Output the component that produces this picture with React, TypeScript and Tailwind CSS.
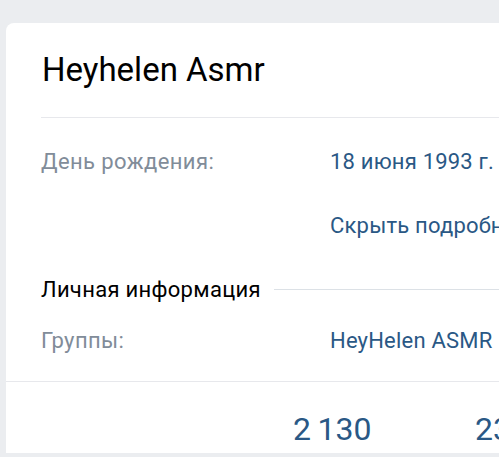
import React from "react";

const font = { fontFamily: "Roboto, 'Noto Sans', sans-serif" };

function Row({ label, value }: { label: string; value: string }) {
  return (
    <div className="flex items-center h-[30px]">
      <div className="w-[289px] shrink-0 text-[#818c99] tracking-[0.4px]">{label}</div>
      <div className="text-[#2a5885] whitespace-nowrap tracking-[0.2px]">{value}</div>
    </div>
  );
}

export default function App() {
  return (
    <div className="w-[499px] h-[457px] overflow-hidden bg-[#ebedf0]" style={font}>
      <div className="ml-[6px] mt-[23px] w-[600px] bg-white rounded-tl-[8px] text-[22px]">
        <div className="ml-[35px]">
          <div className="h-[94px] flex items-center pl-[1px] text-[33px] text-black">Heyhelen Asmr</div>
          <div className="h-px bg-[#e7e8ec]" />
          <div className="pt-[28px]">
            <Row label="День рождения:" value="18 июня 1993 г." />
          </div>
          <div className="mt-[34px] ml-[289px] h-[30px] flex items-center text-[#2a5885] whitespace-nowrap tracking-[0.2px]">
            Скрыть подробную информацию
          </div>
          <div className="mt-[34px] h-[30px] flex items-center gap-[13px]">
            <span className="text-black whitespace-nowrap tracking-[0.3px]">Личная информация</span>
            <div className="flex-1 h-px bg-[#dce1e6]" />
          </div>
          <div className="mt-[21px]">
            <Row label="Группы:" value="HeyHelen ASMR" />
          </div>
        </div>
        <div className="mt-[26px] h-px bg-[#e7e8ec]" />
        <div className="flex pl-[287px] pt-[23px] text-[32px] text-[#2a5885]">
          <div className="w-[182px]">2&#8201;130</div>
          <div>23</div>
        </div>
      </div>
    </div>
  );
}
